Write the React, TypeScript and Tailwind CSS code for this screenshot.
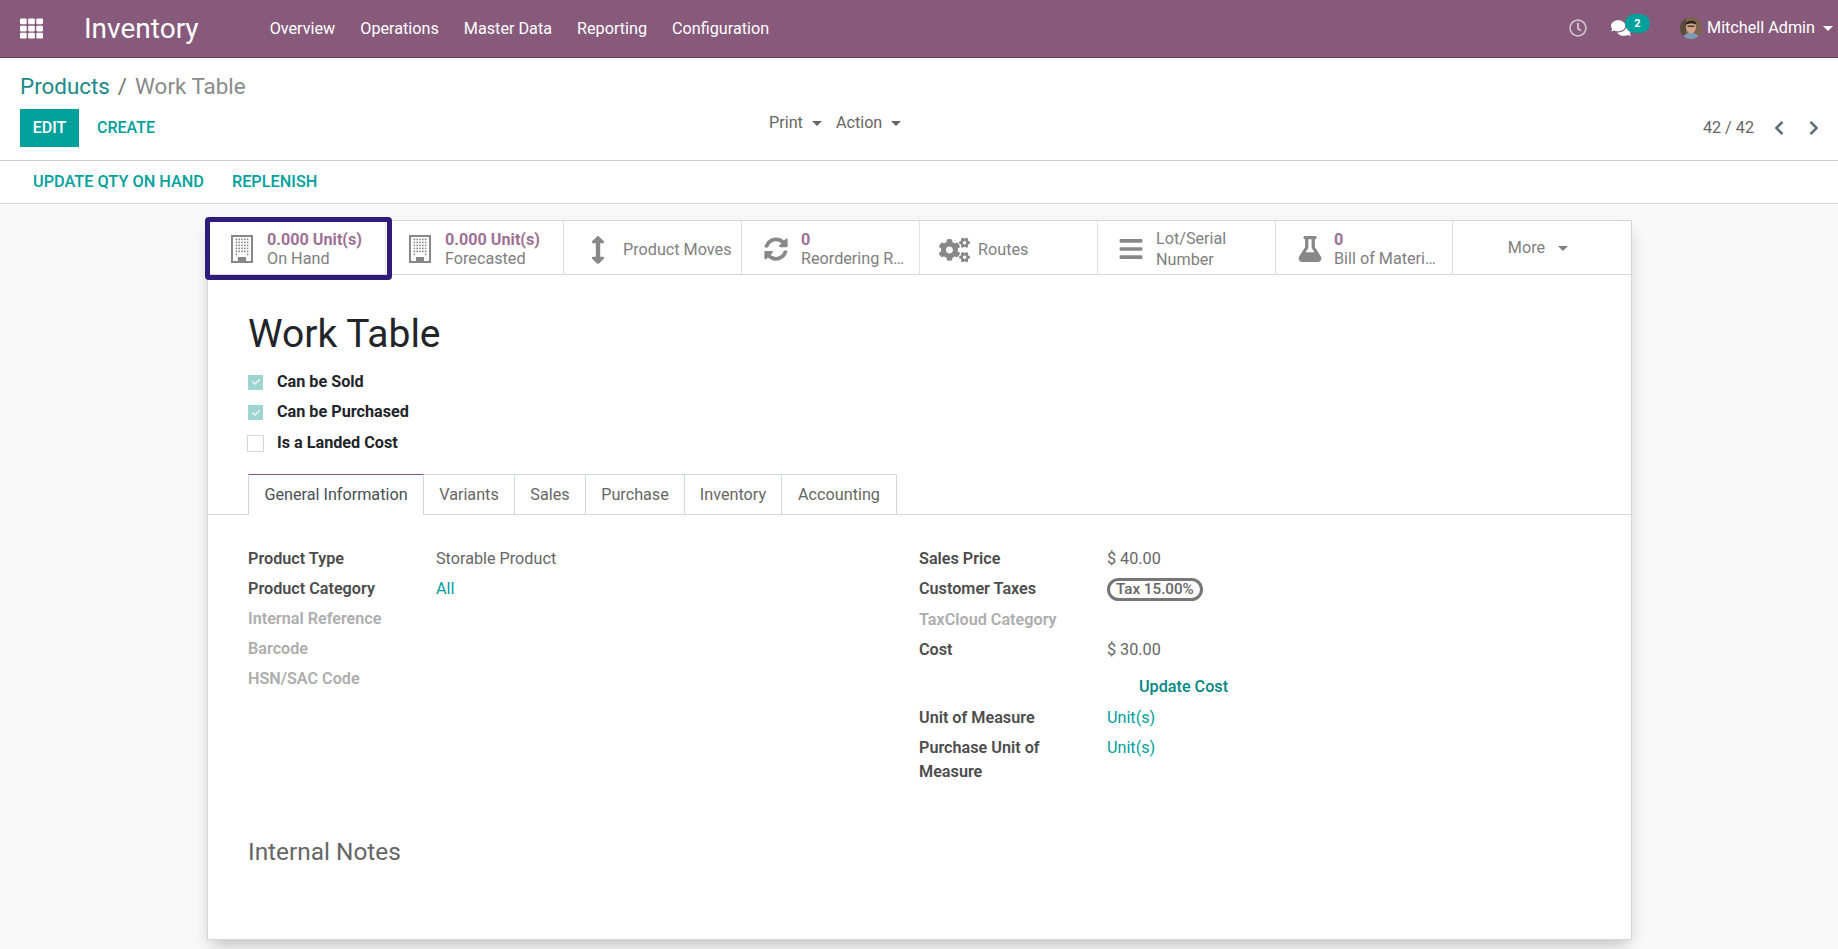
import { ReactNode } from "react"
import {
  FaArrowsAltV,
  FaBars,
  FaCheck,
  FaChevronLeft,
  FaChevronRight,
  FaCogs,
  FaComments,
  FaFlask,
  FaRegClock,
  FaSyncAlt,
  FaTh,
} from "react-icons/fa"

function Caret({ className = "" }: { className?: string }) {
  return <span className={`inline-block h-0 w-0 border-x-[5px] border-t-[5px] border-x-transparent ${className}`} />
}

function BuildingIcon() {
  const dots = []
  for (let r = 0; r < 6; r++) {
    for (let c = 0; c < 5; c++) {
      if (r === 5 && c > 0 && c < 4) continue
      dots.push(<rect key={`${r}-${c}`} x={4.6 + c * 2.8} y={3.6 + r * 3} width="1.6" height="1.6" />)
    }
  }
  return (
    <svg width="22" height="28" viewBox="0 0 22 28" fill="#888">
      <path d="M0 0h22v28H0z M2 2v24h5v-4h8v4h5V2z" fillRule="evenodd" />
      {dots}
    </svg>
  )
}

function Avatar() {
  return (
    <svg width="22" height="22" viewBox="0 0 22 22" className="shrink-0">
      <defs>
        <clipPath id="av">
          <circle cx="11" cy="11" r="11" />
        </clipPath>
      </defs>
      <g clipPath="url(#av)">
        <rect width="22" height="22" fill="#7d6350" />
        <rect x="0" y="0" width="6" height="22" fill="#5b4a3e" />
        <ellipse cx="11" cy="10" rx="5" ry="6.5" fill="#d3a68b" />
        <path d="M5.5 8c0-5 11-6 11 0-2-2-8-2-11 0z" fill="#2c211c" />
        <rect x="7.5" y="8.5" width="7" height="1.4" fill="#3a2f2a" />
        <path d="M3 22c0-5 4-6 8-6s8 1 8 6z" fill="#7f9bb0" />
      </g>
    </svg>
  )
}

function StatButton({
  icon,
  value,
  label,
  boxClass = "w-[178px] gap-[5px] pr-[10px]",
}: {
  icon: ReactNode
  value?: string
  label: string
  boxClass?: string
}) {
  return (
    <div className={`flex h-full shrink-0 items-center border-r border-[#dee2e6] pl-[14px] ${boxClass} ${value ? "pt-[2px]" : "pt-[4px]"}`}>
      <span className="flex w-[40px] shrink-0 items-center justify-center text-[#888]">{icon}</span>
      <div className="min-w-0 leading-[19px] text-[#808080]">
        {value && <div className="font-bold text-[#9c7194]">{value}</div>}
        <div className="truncate">{label}</div>
      </div>
    </div>
  )
}

function Field({
  label,
  value,
  muted,
  teal,
  rowClass = "h-[30px]",
}: {
  label: string
  value?: string
  muted?: boolean
  teal?: boolean
  rowClass?: string
}) {
  return (
    <div className={`flex items-center ${rowClass}`}>
      <div className={`w-[188px] shrink-0 font-semibold ${muted ? "text-[#adadad]" : "text-[#4c4c4c]"}`}>{label}</div>
      {value && <div className={teal ? "text-[#00a09d]" : "text-[#666]"}>{value}</div>}
    </div>
  )
}

const tabs = [
  { name: "Variants", width: "w-[91px]" },
  { name: "Sales", width: "w-[71px]" },
  { name: "Purchase", width: "w-[99px]" },
  { name: "Inventory", width: "w-[97px]" },
  { name: "Accounting", width: "w-[115px]" },
]

export default function App() {
  return (
    <div className="h-[949px] overflow-hidden bg-[#f9f9f9] text-[16.2px] text-[#666]" style={{ fontFamily: "Roboto, sans-serif" }}>
      <header className="flex h-[58px] items-center border-b border-[#5f3f58] bg-[#875a7b] text-white">
        <FaTh className="ml-[20px] h-[23px] w-[23px]" />
        <span className="ml-[41px] text-[28px] font-normal">Inventory</span>
        <nav className="ml-[71px] flex items-center gap-[25px] pt-[1px]">
          <span>Overview</span>
          <span>Operations</span>
          <span>Master Data</span>
          <span>Reporting</span>
          <span>Configuration</span>
        </nav>
        <div className="ml-auto flex items-center">
          <FaRegClock className="h-[18px] w-[18px] opacity-60" />
          <div className="relative ml-[24px] w-[38px]">
            <FaComments className="h-[18px] w-[20px]" />
            <span className="absolute -top-[5px] left-[14px] flex h-[19px] w-[25px] items-center justify-center rounded-full bg-[#00a09d] text-[11px] font-bold">
              2
            </span>
          </div>
          <div className="ml-[31px]">
            <Avatar />
          </div>
          <span className="ml-[5px]">Mitchell Admin</span>
          <Caret className="ml-[8px] mr-[5px] border-t-white" />
        </div>
      </header>

      <div className="h-[103px] border-b border-[#ccc] bg-white px-[20px]">
        <div className="flex h-[44px] items-end text-[22.4px] leading-[32px]">
          <span className="text-[#1c8a88]">Products</span>
          <span className="mx-[8px] text-[#777]">/</span>
          <span className="text-[#8a8a8a]">Work Table</span>
        </div>
        <div className="flex items-start pt-[7px]">
          <div className="flex w-[749px] items-center">
            <button className="h-[38px] w-[59px] bg-[#00a09d] text-[16px] font-medium text-white">EDIT</button>
            <span className="ml-[18px] text-[16px] font-medium text-[#00a09d]">CREATE</span>
          </div>
          <div className="flex items-center pt-[2px] text-[#666]">
            <span>Print</span>
            <Caret className="ml-[9px] border-t-[#666]" />
            <span className="ml-[14px]">Action</span>
            <Caret className="ml-[9px] border-t-[#666]" />
          </div>
          <div className="ml-auto flex h-[38px] items-center">
            <span>42 / 42</span>
            <FaChevronLeft className="ml-[19px] h-[16px] w-[12px] text-[#5a6e7a]" />
            <FaChevronRight className="ml-[23px] mr-[-2px] h-[16px] w-[12px] text-[#5a6e7a]" />
          </div>
        </div>
      </div>

      <div className="flex h-[43px] items-center gap-[28px] border-b border-[#d4d4d4] bg-white pl-[33px] pt-[1px] text-[16.3px] font-medium text-[#00a09d]">
        <span>UPDATE QTY ON HAND</span>
        <span>REPLENISH</span>
      </div>

      <div className="ml-[207px] mt-[16px] h-[720px] w-[1425px] border border-[#d3d6dc] bg-white shadow-[0_8px_16px_-4px_rgba(0,0,0,0.25)]">
        <div className="relative flex h-[54px] border-b border-[#d3d6dc]">
          <StatButton icon={<BuildingIcon />} value="0.000 Unit(s)" label="On Hand" />
          <StatButton icon={<BuildingIcon />} value="0.000 Unit(s)" label="Forecasted" />
          <StatButton icon={<FaArrowsAltV className="h-[32px] w-[14px]" />} label="Product Moves" boxClass="w-[178px] gap-[5px] pr-[2px]" />
          <StatButton icon={<FaSyncAlt className="h-[24px] w-[24px]" />} value="0" label="Reordering Rules" />
          <StatButton icon={<FaCogs className="h-[26px] w-[31px]" />} label="Routes" boxClass="w-[178px] gap-[4px] pr-[10px]" />
          <div className="flex h-full w-[178px] shrink-0 items-center gap-[5px] border-r border-[#dee2e6] pl-[13px] pt-[2px]">
            <span className="flex w-[40px] shrink-0 justify-center text-[#888]">
              <FaBars className="h-[26px] w-[24px]" />
            </span>
            <div className="leading-[21px] text-[#808080]">
              <div>Lot/Serial</div>
              <div>Number</div>
            </div>
          </div>
          <StatButton icon={<FaFlask className="h-[26px] w-[24px]" />} value="0" label="Bill of Materials" boxClass="w-[177px] gap-[4px] pr-[10px]" />
          <div className="flex flex-1 items-center justify-center gap-[13px] pr-[8px] pt-[2px] text-[#808080]">
            <span>More</span>
            <Caret className="border-t-[#808080]" />
          </div>
          <div className="absolute -left-[3px] -top-[4px] h-[63px] w-[187px] rounded-[4px] border-[5px] border-[#2f1b79]" />
        </div>

        <div className="px-[40px]">
          <h1 className="pt-[36px] text-[39px] font-normal leading-[47px] text-[#212529]">Work Table</h1>
          <div className="mt-[9px] text-[16.2px] font-bold text-[#212529]">
            <label className="flex h-[30px] items-center gap-[14px]">
              <span className="flex h-[15px] w-[15px] items-center justify-center bg-[#9fd5d1] text-white">
                <FaCheck className="h-[8px] w-[8px] opacity-80" />
              </span>
              Can be Sold
            </label>
            <label className="flex h-[31px] items-center gap-[14px]">
              <span className="flex h-[15px] w-[15px] items-center justify-center bg-[#9fd5d1] text-white">
                <FaCheck className="h-[8px] w-[8px] opacity-80" />
              </span>
              Can be Purchased
            </label>
            <label className="flex h-[30px] items-center gap-[13px]">
              <span className="-ml-[1px] h-[17px] w-[17px] border border-[#d5d5d5] bg-white" />
              Is a Landed Cost
            </label>
          </div>
        </div>

        <div className="mt-[16px] flex h-[41px] border-b border-[#d3d6dc] pl-[40px]">
          <div className="flex h-[41px] w-[176px] items-center justify-center border-x border-t border-x-[#d3d6dc] border-t-[#875a7b] bg-white text-[#495057]">
            General Information
          </div>
          {tabs.map((t) => (
            <div key={t.name} className={`flex h-[40px] ${t.width} items-center justify-center border-r border-t border-[#d3d6dc] pt-[1px] text-[#666]`}>
              {t.name}
            </div>
          ))}
        </div>

        <div className="grid grid-cols-[671px_1fr] pl-[40px] pt-[29px]">
          <div>
            <Field label="Product Type" value="Storable Product" />
            <Field label="Product Category" value="All" teal />
            <Field label="Internal Reference" muted />
            <Field label="Barcode" muted />
            <Field label="HSN/SAC Code" muted />
          </div>
          <div>
            <Field label="Sales Price" value="$ 40.00" />
            <div className="flex h-[30px] items-center">
              <div className="w-[188px] shrink-0 font-semibold text-[#4c4c4c]">Customer Taxes</div>
              <span className="rounded-full border-[3px] border-[#777] px-[6px] text-[15.2px] font-medium leading-[17px] text-[#666]">Tax 15.00%</span>
            </div>
            <Field label="TaxCloud Category" muted rowClass="h-[31px] pt-[1px]" />
            <Field label="Cost" value="$ 30.00" />
            <div className="h-[38px] pl-[220px] pt-[12px] font-medium leading-[20px] text-[#008784]">Update Cost</div>
            <Field label="Unit of Measure" value="Unit(s)" teal />
            <div className="flex pt-[3px] leading-[24px]">
              <div className="w-[188px] shrink-0 font-semibold text-[#4c4c4c]">
                Purchase Unit of
                <br />
                Measure
              </div>
              <div className="text-[#00a09d]">Unit(s)</div>
            </div>
          </div>
        </div>

        <h3 className="mt-[52px] pl-[40px] text-[24.4px] font-normal leading-[32px] text-[#666]">Internal Notes</h3>
      </div>
    </div>
  )
}
